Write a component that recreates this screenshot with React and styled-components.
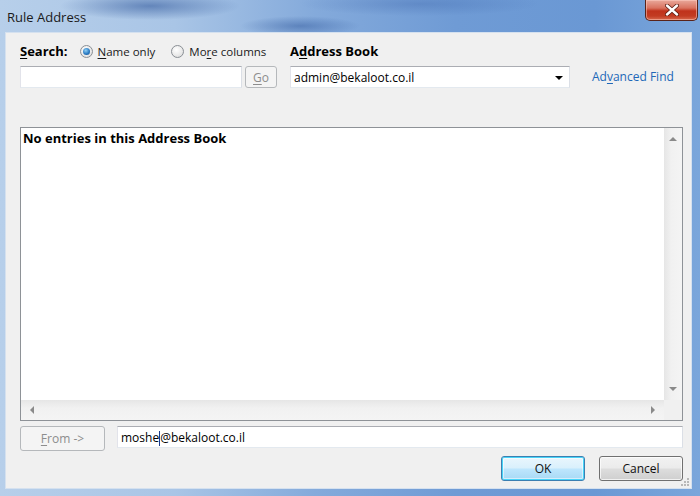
import React from "react";
import styled, { createGlobalStyle } from "styled-components";

const Global = createGlobalStyle`
  html, body { margin: 0; padding: 0; background: #ffffff; }
  body { font-family: "Open Sans", "Noto Sans", sans-serif; font-size: 12px; color: #000; }
  * { box-sizing: border-box; }
`;

const Window = styled.div`
  width: 700px;
  height: 496px;
  display: flex;
  flex-direction: column;
  overflow: hidden;
  background:
    radial-gradient(ellipse 90px 14px at 150px 6px, rgba(40, 80, 150, 0.55), rgba(40, 80, 150, 0) 100%),
    radial-gradient(ellipse 60px 10px at 300px 26px, rgba(40, 80, 150, 0.45), rgba(40, 80, 150, 0) 100%),
    radial-gradient(ellipse 120px 12px at 420px 4px, rgba(60, 100, 170, 0.35), rgba(60, 100, 170, 0) 100%),
    linear-gradient(to right, #b7cfea 0%, #a9c5e6 25%, #84aadb 45%, #6f9bd5 65%, #6a98d4 85%, #7aa6db 100%);
`;

const TitleBar = styled.div`
  height: 32px;
  flex: none;
  display: flex;
  align-items: center;
  padding: 0 2px 0 7px;
`;

const Title = styled.span`
  font-family: "Open Sans", "Noto Sans", sans-serif;
  font-size: 13px;
  color: #1a1a1a;
  margin-top: 1px;
`;

const CloseButton = styled.div`
  margin-left: auto;
  align-self: flex-start;
  width: 53px;
  height: 21px;
  display: flex;
  align-items: center;
  justify-content: center;
  border: 1px solid #5a2318;
  border-top: none;
  border-radius: 0 0 5px 5px;
  background: linear-gradient(to bottom, #e9a99b 0%, #d9725f 40%, #c0321b 55%, #c23b22 80%, #d8684c 100%);
  box-shadow: inset 0 0 0 1px rgba(255, 210, 200, 0.5);
`;

const Client = styled.div`
  flex: 1;
  margin: 0 8px 7px 5px;
  background: #f0f0f0;
  border: 1px solid #d5e1ef;
  display: flex;
  flex-direction: column;
  padding: 10px 8px 7px 14px;
  position: relative;
`;

const TopArea = styled.div`
  display: flex;
  align-items: flex-start;
`;

const Column = styled.div`
  width: ${(p) => p.$w}px;
  margin-left: ${(p) => p.$ml || 0}px;
  display: flex;
  flex-direction: column;
  gap: 7px;
`;

const LabelRow = styled.div`
  height: 16px;
  display: flex;
  align-items: center;
  white-space: nowrap;
`;

const BoldLabel = styled.span`
  font-weight: 700;
  font-size: 13px;
  margin-right: ${(p) => p.$mr || 0}px;
`;

const U = styled.span`
  text-decoration: underline;
  text-underline-offset: 2px;
`;

const RadioLabel = styled.label`
  display: flex;
  align-items: center;
  gap: 5px;
  margin-right: ${(p) => p.$mr || 0}px;
  font-size: 11.5px;
  color: #1a1a1a;
`;

const RadioCircle = styled.span`
  width: 13px;
  height: 13px;
  border-radius: 50%;
  border: 1px solid #8a8f95;
  background: radial-gradient(circle at 40% 35%, #ffffff 0%, #e8e8e8 60%, #d4d4d4 100%);
  display: flex;
  align-items: center;
  justify-content: center;
  &::after {
    content: "";
    width: 7px;
    height: 7px;
    border-radius: 50%;
    display: ${(p) => (p.$checked ? "block" : "none")};
    background: radial-gradient(circle at 40% 35%, #8fd0f5 0%, #2c7cc4 55%, #134e8a 100%);
  }
`;

const InputRow = styled.div`
  display: flex;
  gap: 3px;
  height: 22px;
`;

const TextBox = styled.div`
  width: ${(p) => (p.$w ? `${p.$w}px` : "auto")};
  flex: ${(p) => (p.$w ? "none" : 1)};
  height: 22px;
  background: #ffffff;
  border: 1px solid;
  border-color: #abadb3 #dbdfe6 #e3e9ef #e2e3ea;
  display: flex;
  align-items: center;
  padding: 0 3px;
  font-size: 12px;
  white-space: nowrap;
  margin-left: ${(p) => p.$ml || 0}px;
`;

const Caret = styled.span`
  display: inline-block;
  width: 1px;
  height: 15px;
  background: #1a3b8c;
  margin: 0 0 -3px 0;
`;

const WinButton = styled.div`
  width: ${(p) => p.$w}px;
  height: ${(p) => p.$h || 25}px;
  flex: none;
  display: flex;
  align-items: center;
  justify-content: center;
  border-radius: 3px;
  font-size: 12px;
  color: ${(p) => (p.$disabled ? "#8d8d8d" : "#111")};
  border: 1px solid ${(p) => (p.$disabled ? "#b5b8bb" : p.$default ? "#3c7fb1" : "#707070")};
  background: ${(p) =>
    p.$disabled
      ? "#f4f4f4"
      : p.$default
      ? "linear-gradient(to bottom, #eaf6fd 0%, #d9f0fc 48%, #bee6fd 52%, #a7d9f5 100%)"
      : "linear-gradient(to bottom, #f2f2f2 0%, #ebebeb 48%, #dddddd 52%, #cfcfcf 100%)"};
  box-shadow: ${(p) =>
    p.$default ? "inset 0 0 0 1px #48d4f8, inset 0 0 0 2px rgba(255,255,255,0.5)" : p.$disabled ? "none" : "inset 0 0 0 1px rgba(255,255,255,0.7)"};
`;

const Combo = styled.div`
  height: 22px;
  background: #ffffff;
  border: 1px solid;
  border-color: #abadb3 #dbdfe6 #e3e9ef #e2e3ea;
  display: flex;
  align-items: center;
  padding: 0 6px 0 3px;
  font-size: 12px;
  justify-content: space-between;
`;

const ComboArrow = styled.span`
  width: 0;
  height: 0;
  border-left: 4px solid transparent;
  border-right: 4px solid transparent;
  border-top: 4px solid #000;
  margin-top: 2px;
`;

const LinkText = styled.span`
  margin-left: 22px;
  margin-top: 23px;
  height: 22px;
  line-height: 22px;
  color: #2168b8;
  font-size: 12px;
  white-space: nowrap;
`;

const ListBox = styled.div`
  margin-top: 39px;
  height: 294px;
  border: 1px solid #8e9297;
  display: grid;
  grid-template-columns: 1fr 18px;
  grid-template-rows: 1fr 20px;
  background: #ffffff;
`;

const ListContent = styled.div`
  padding: 1px 2px;
  font-weight: 700;
  font-size: 13px;
`;

const VScroll = styled.div`
  background: linear-gradient(to right, #e6e6e6 0%, #f1f1f1 40%, #f4f4f4 100%);
  display: flex;
  flex-direction: column;
  justify-content: space-between;
  align-items: center;
  padding: 9px 0;
`;

const HScroll = styled.div`
  background: linear-gradient(to bottom, #e6e6e6 0%, #f1f1f1 40%, #f4f4f4 100%);
  display: flex;
  justify-content: space-between;
  align-items: center;
  padding: 0 9px;
`;

const Corner = styled.div`
  background: #f0f0f0;
`;

const Arrow = styled.span`
  width: 0;
  height: 0;
  ${(p) =>
    p.$dir === "up"
      ? "border-left: 4px solid transparent; border-right: 4px solid transparent; border-bottom: 4px solid #8a8a8a;"
      : p.$dir === "down"
      ? "border-left: 4px solid transparent; border-right: 4px solid transparent; border-top: 4px solid #8a8a8a;"
      : p.$dir === "left"
      ? "border-top: 4px solid transparent; border-bottom: 4px solid transparent; border-right: 4px solid #8a8a8a;"
      : "border-top: 4px solid transparent; border-bottom: 4px solid transparent; border-left: 4px solid #8a8a8a;"}
`;

const FromRow = styled.div`
  margin-top: 5px;
  display: flex;
  align-items: flex-start;
  height: 25px;
`;

const ButtonRow = styled.div`
  margin-top: 5px;
  display: flex;
  justify-content: flex-end;
  gap: 14px;
`;

const Grip = styled.svg`
  position: absolute;
  right: 1px;
  bottom: 1px;
`;

export default function App() {
  return (
    <>
      <Global />
      <Window>
        <TitleBar>
          <Title>Rule Address</Title>
          <CloseButton>
            <svg width="14" height="12" viewBox="0 0 14 12">
              <path d="M2 1.5 L12 10.5 M12 1.5 L2 10.5" stroke="#5a1a10" strokeWidth="4" strokeLinecap="round" />
              <path d="M2 1.5 L12 10.5 M12 1.5 L2 10.5" stroke="#ffffff" strokeWidth="2.4" strokeLinecap="round" />
            </svg>
          </CloseButton>
        </TitleBar>
        <Client>
          <TopArea>
            <Column $w={257}>
              <LabelRow>
                <BoldLabel $mr={12}>
                  <U>S</U>earch:
                </BoldLabel>
                <RadioLabel $mr={16}>
                  <RadioCircle $checked />
                  <span>
                    <U>N</U>ame only
                  </span>
                </RadioLabel>
                <RadioLabel>
                  <RadioCircle />
                  <span>
                    Mo<U>r</U>e columns
                  </span>
                </RadioLabel>
              </LabelRow>
              <InputRow>
                <TextBox $w={222} />
                <WinButton $w={32} $h={22} $disabled>
                  <span>
                    <U>G</U>o
                  </span>
                </WinButton>
              </InputRow>
            </Column>
            <Column $w={280} $ml={13}>
              <LabelRow>
                <BoldLabel>
                  A<U>d</U>dress Book
                </BoldLabel>
              </LabelRow>
              <Combo>
                <span>admin@bekaloot.co.il</span>
                <ComboArrow />
              </Combo>
            </Column>
            <LinkText>
              Ad<U>v</U>anced Find
            </LinkText>
          </TopArea>
          <ListBox>
            <ListContent>No entries in this Address Book</ListContent>
            <VScroll>
              <Arrow $dir="up" />
              <Arrow $dir="down" />
            </VScroll>
            <HScroll>
              <Arrow $dir="left" />
              <Arrow $dir="right" />
            </HScroll>
            <Corner />
          </ListBox>
          <FromRow>
            <WinButton $w={85} $disabled>
              <span>
                <U>F</U>rom -&gt;
              </span>
            </WinButton>
            <TextBox $ml={12}>
              moshe
              <Caret />
              @bekaloot.co.il
            </TextBox>
          </FromRow>
          <ButtonRow>
            <WinButton $w={84} $default>
              OK
            </WinButton>
            <WinButton $w={84}>Cancel</WinButton>
          </ButtonRow>
          <Grip width="10" height="10" viewBox="0 0 10 10">
            <g fill="#b8b8b8">
              <rect x="7" y="1" width="2" height="2" />
              <rect x="4" y="4" width="2" height="2" />
              <rect x="7" y="4" width="2" height="2" />
              <rect x="1" y="7" width="2" height="2" />
              <rect x="4" y="7" width="2" height="2" />
              <rect x="7" y="7" width="2" height="2" />
            </g>
          </Grip>
        </Client>
      </Window>
    </>
  );
}
